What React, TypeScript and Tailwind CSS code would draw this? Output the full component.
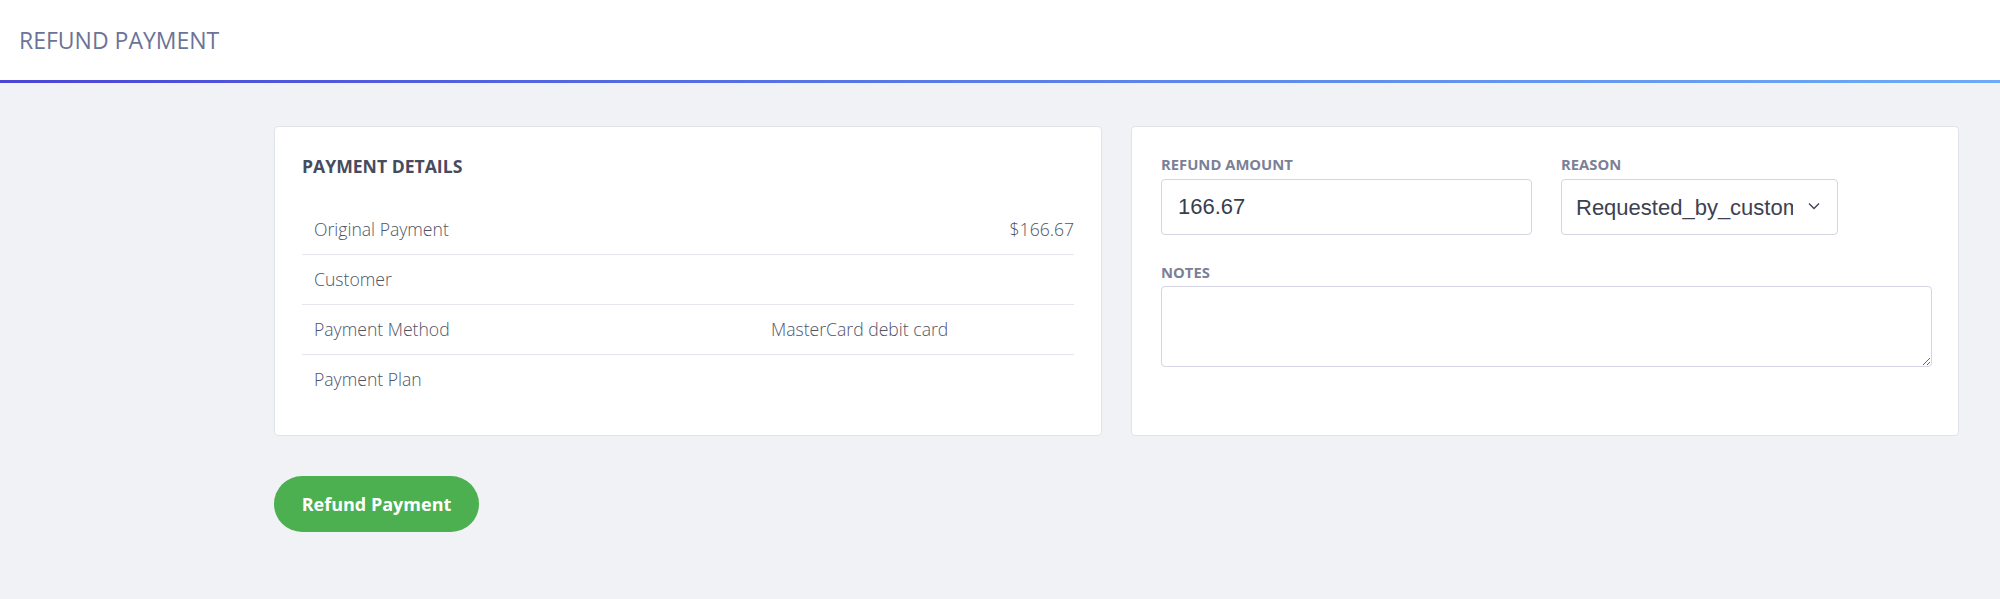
import { useState } from 'react'

const rows = [
  { label: 'Original Payment', value: '$166.67', right: true },
  { label: 'Customer', value: '' },
  { label: 'Payment Method', value: 'MasterCard debit card' },
  { label: 'Payment Plan', value: '' },
]

export default function App() {
  const [amount, setAmount] = useState('166.67')
  const [reason, setReason] = useState('requested_by_customer')
  const [notes, setNotes] = useState('')

  return (
    <div className="min-h-[599px] bg-[#f1f2f6]" style={{ fontFamily: '"Open Sans", Lato, sans-serif' }}>
      <header className="bg-white">
        <div className="h-[80px] flex items-center px-[19px]">
          <h1 className="text-[23px] text-[#6b7399] font-normal">REFUND PAYMENT</h1>
        </div>
        <div className="h-[3px] bg-gradient-to-r from-[#4b45d6] via-[#5a7ee8] to-[#6eaaf5]" />
      </header>

      <main className="pl-[274px] pr-[41px] pt-[43px]">
        <div className="grid grid-cols-2 gap-[29px]">
          <section className="bg-white border border-[#e1e3ea] rounded-[4px] px-[27px] pt-[27px] pb-[31px]">
            <h2 className="text-[17.6px] leading-[24px] font-bold text-[#474b5e]">PAYMENT DETAILS</h2>
            <table className="w-full mt-[26px] text-[17.6px] text-[#4f5467] font-light">
              <tbody>
                {rows.map((r, i) => (
                  <tr key={r.label} className={i < rows.length - 1 ? 'border-b border-[#e6e7ee]' : ''}>
                    <td className="h-[50px] pl-[12px] w-[457px]">{r.label}</td>
                    <td className={r.right ? 'h-[50px] text-right' : 'h-[50px] pl-[12px]'}>{r.value}</td>
                  </tr>
                ))}
              </tbody>
            </table>
          </section>

          <section className="bg-white border border-[#e1e3ea] rounded-[4px] px-[29px] pt-[27px] pb-[27px]">
            <div className="flex gap-[29px]">
              <div className="w-[371px]">
                <label className="block text-[14.8px] leading-[20px] font-bold text-[#7b8096]">REFUND AMOUNT</label>
                <input
                  value={amount}
                  onChange={e => setAmount(e.target.value)}
                  className="mt-[5px] w-full h-[56px] border border-[#d3d6e2] rounded-[4px] px-[16px] text-[22px] text-[#3a3d4a] outline-none"
                  style={{ fontFamily: '"Liberation Sans", Arial, sans-serif' }}
                />
              </div>
              <div className="w-[277px]">
                <label className="block text-[14.8px] leading-[20px] font-bold text-[#7b8096]">REASON</label>
                <div className="relative mt-[5px]">
                  <select
                    value={reason}
                    onChange={e => setReason(e.target.value)}
                    className="appearance-none w-full h-[56px] border border-[#d3d6e2] rounded-[4px] bg-white pl-[14px] pr-[44px] text-[22px] text-[#3d4152] outline-none"
                    style={{ fontFamily: '"Liberation Sans", Arial, sans-serif' }}
                  >
                    <option value="requested_by_customer">Requested_by_customer</option>
                    <option value="duplicate">Duplicate</option>
                    <option value="fraudulent">Fraudulent</option>
                  </select>
                  <svg className="absolute right-[18px] top-[23px] pointer-events-none" width="12" height="8" viewBox="0 0 12 8" fill="none">
                    <path d="M1 1.5 6 6.5 11 1.5" stroke="#3d4152" strokeWidth="1.3" />
                  </svg>
                </div>
              </div>
            </div>

            <label className="block mt-[27px] text-[14.8px] leading-[20px] font-bold text-[#7b8096]">NOTES</label>
            <textarea
              value={notes}
              onChange={e => setNotes(e.target.value)}
              className="mt-[4px] block w-[771px] h-[81px] border border-[#d3d6e2] rounded-[4px] px-[14px] py-[10px] text-[16px] outline-none"
            />
          </section>
        </div>

        <button className="mt-[40px] w-[205px] h-[56px] rounded-full bg-[#4caf50] text-white text-[18px] font-bold">
          Refund Payment
        </button>
      </main>
    </div>
  )
}
